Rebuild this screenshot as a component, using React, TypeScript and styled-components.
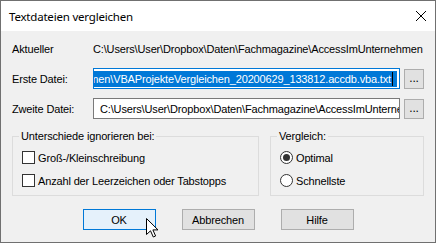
import styled, { createGlobalStyle } from 'styled-components'

// Dialog "Textdateien vergleichen" im Windows-10-Stil

type Props = {
    focused?: boolean
    checked?: boolean
    primary?: boolean
}

const GlobalStyle = createGlobalStyle`
    html, body {
        margin: 0;
        padding: 0;
        background: #ffffff;
    }
    body {
        font-family: "Liberation Sans", Arial, sans-serif;
        font-size: 11px;
        letter-spacing: -0.15px;
        color: #000000;
    }
`

const Window = styled.div`
    width: 436px;
    height: 243px;
    box-sizing: border-box;
    border: 1px solid #707070;
    display: flex;
    flex-direction: column;
    background: #f0f0f0;
    overflow: hidden;
`

const TitleBar = styled.div`
    height: 30px;
    flex: none;
    background: #ffffff;
    display: flex;
    align-items: center;
    padding: 0 9px 0 8px;
    font-family: "Noto Sans", "Open Sans", sans-serif;
    font-size: 11.5px;
    letter-spacing: -0.2px;
`

const TitleText = styled.span`
    flex: 1;
`

const CloseIcon = styled.svg`
    width: 10px;
    height: 10px;
    flex: none;
`

const Body = styled.div`
    flex: 1;
    padding: 8px 11px 0 11px;
    display: flex;
    flex-direction: column;
`

const Fields = styled.div`
    display: flex;
    flex-direction: column;
    gap: 9px;
`

const Row = styled.div`
    display: flex;
    align-items: center;
    min-height: 20px;
`

const Label = styled.span`
    width: 81px;
    flex: none;
    white-space: nowrap;
`

const Value = styled.span`
    flex: 1;
    white-space: nowrap;
    overflow: hidden;
`

const Input = styled.div<Props>`
    width: 307px;
    height: 21px;
    flex: none;
    box-sizing: border-box;
    border: 1px solid ${p => p.focused ? '#0078d7' : '#7a7a7a'};
    background: #ffffff;
    display: flex;
    align-items: center;
    justify-content: ${p => p.focused ? 'flex-end' : 'flex-start'};
    padding: ${p => p.focused ? '0 2px 0 1px' : '0 2px 0 6px'};
    overflow: hidden;
    white-space: nowrap;
`

const Selected = styled.span`
    flex: none;
    height: 16px;
    line-height: 16px;
    background: #0078d7;
    color: #ffffff;
    padding-right: 4px;
    display: flex;
    align-items: center;
`

const Caret = styled.span`
    width: 1px;
    height: 14px;
    background: #000000;
    margin-left: 1px;
`

const DotsButton = styled.div`
    width: 20px;
    height: 20px;
    margin-left: 4px;
    box-sizing: border-box;
    background: #e1e1e1;
    border: 1px solid #adadad;
    display: flex;
    align-items: flex-end;
    justify-content: center;
    padding-bottom: 4px;
    line-height: 1;
    font-size: 12px;
`

const Groups = styled.div`
    display: flex;
    gap: 11px;
    margin-top: 11px;
`

const Group = styled.fieldset`
    margin: 0;
    padding: 0 0 0 9px;
    height: 66px;
    box-sizing: border-box;
    border: 1px solid #dcdcdc;
    flex: none;
    width: 247px;
    &:last-child {
        flex: 1;
        width: auto;
    }
`

const Legend = styled.legend`
    padding: 0 2px;
    margin-left: -3px;
    line-height: 13px;
`

const Options = styled.div`
    display: flex;
    flex-direction: column;
    gap: 10px;
    padding-top: 8px;
`

const Option = styled.label`
    display: flex;
    align-items: center;
    gap: 3px;
    height: 13px;
    white-space: nowrap;
`

const CheckBox = styled.span`
    width: 13px;
    height: 13px;
    box-sizing: border-box;
    border: 1px solid #333333;
    background: #ffffff;
    flex: none;
`

const Radio = styled.span<Props>`
    width: 13px;
    height: 13px;
    box-sizing: border-box;
    border: 1px solid #333333;
    border-radius: 50%;
    background: #ffffff;
    flex: none;
    display: flex;
    align-items: center;
    justify-content: center;
    &::after {
        content: '';
        width: 7px;
        height: 7px;
        border-radius: 50%;
        background: #333333;
        display: ${p => p.checked ? 'block' : 'none'};
    }
`

const Buttons = styled.div`
    display: flex;
    justify-content: center;
    gap: 26px;
    margin-top: 13px;
`

const Button = styled.div<Props>`
    position: relative;
    width: 73px;
    height: 21px;
    box-sizing: border-box;
    border: 1px solid ${p => p.primary ? '#0078d7' : '#adadad'};
    background: ${p => p.primary ? '#e5f1fb' : '#e1e1e1'};
    display: flex;
    align-items: center;
    justify-content: center;
`

const Cursor = styled.svg`
    position: absolute;
    left: 62px;
    top: 8px;
    width: 13px;
    height: 20px;
`

const App = () => {
    return (
        <>
            <GlobalStyle />
            <Window>
                <TitleBar>
                    <TitleText>Textdateien vergleichen</TitleText>
                    <CloseIcon viewBox="0 0 10 10">
                        <path d="M0 0 L10 10 M10 0 L0 10" stroke="#000" strokeWidth="1" />
                    </CloseIcon>
                </TitleBar>
                <Body>
                    <Fields>
                        <Row>
                            <Label>Aktueller</Label>
                            <Value>C:\Users\User\Dropbox\Daten\Fachmagazine\AccessImUnternehmen</Value>
                        </Row>
                        <Row>
                            <Label>Erste Datei:</Label>
                            <Input focused>
                                <Selected>
                                    C:\Users\User\Dropbox\Daten\Fachmagazine\AccessImUnternehmen\VBAProjekteVergleichen_20200629_133812.accdb.vba.txt
                                    <Caret />
                                </Selected>
                            </Input>
                            <DotsButton>...</DotsButton>
                        </Row>
                        <Row>
                            <Label>Zweite Datei:</Label>
                            <Input>C:\Users\User\Dropbox\Daten\Fachmagazine\AccessImUnternehmen\VBAProjekteVergleichen.accdb.vba.txt</Input>
                            <DotsButton>...</DotsButton>
                        </Row>
                    </Fields>
                    <Groups>
                        <Group>
                            <Legend>Unterschiede ignorieren bei:</Legend>
                            <Options>
                                <Option><CheckBox />Groß-/Kleinschreibung</Option>
                                <Option><CheckBox />Anzahl der Leerzeichen oder Tabstopps</Option>
                            </Options>
                        </Group>
                        <Group>
                            <Legend>Vergleich:</Legend>
                            <Options>
                                <Option><Radio checked />Optimal</Option>
                                <Option><Radio />Schnellste</Option>
                            </Options>
                        </Group>
                    </Groups>
                    <Buttons>
                        <Button primary>
                            OK
                            <Cursor viewBox="0 0 13 20">
                                <path d="M0.5 0.5 L0.5 16.5 L4.5 12.8 L7.3 19 L9.6 18 L6.9 11.9 L12 11.9 Z" fill="#fff" stroke="#000" strokeWidth="1" strokeLinejoin="miter" />
                            </Cursor>
                        </Button>
                        <Button>Abbrechen</Button>
                        <Button>Hilfe</Button>
                    </Buttons>
                </Body>
            </Window>
        </>
    )
}

export default App
